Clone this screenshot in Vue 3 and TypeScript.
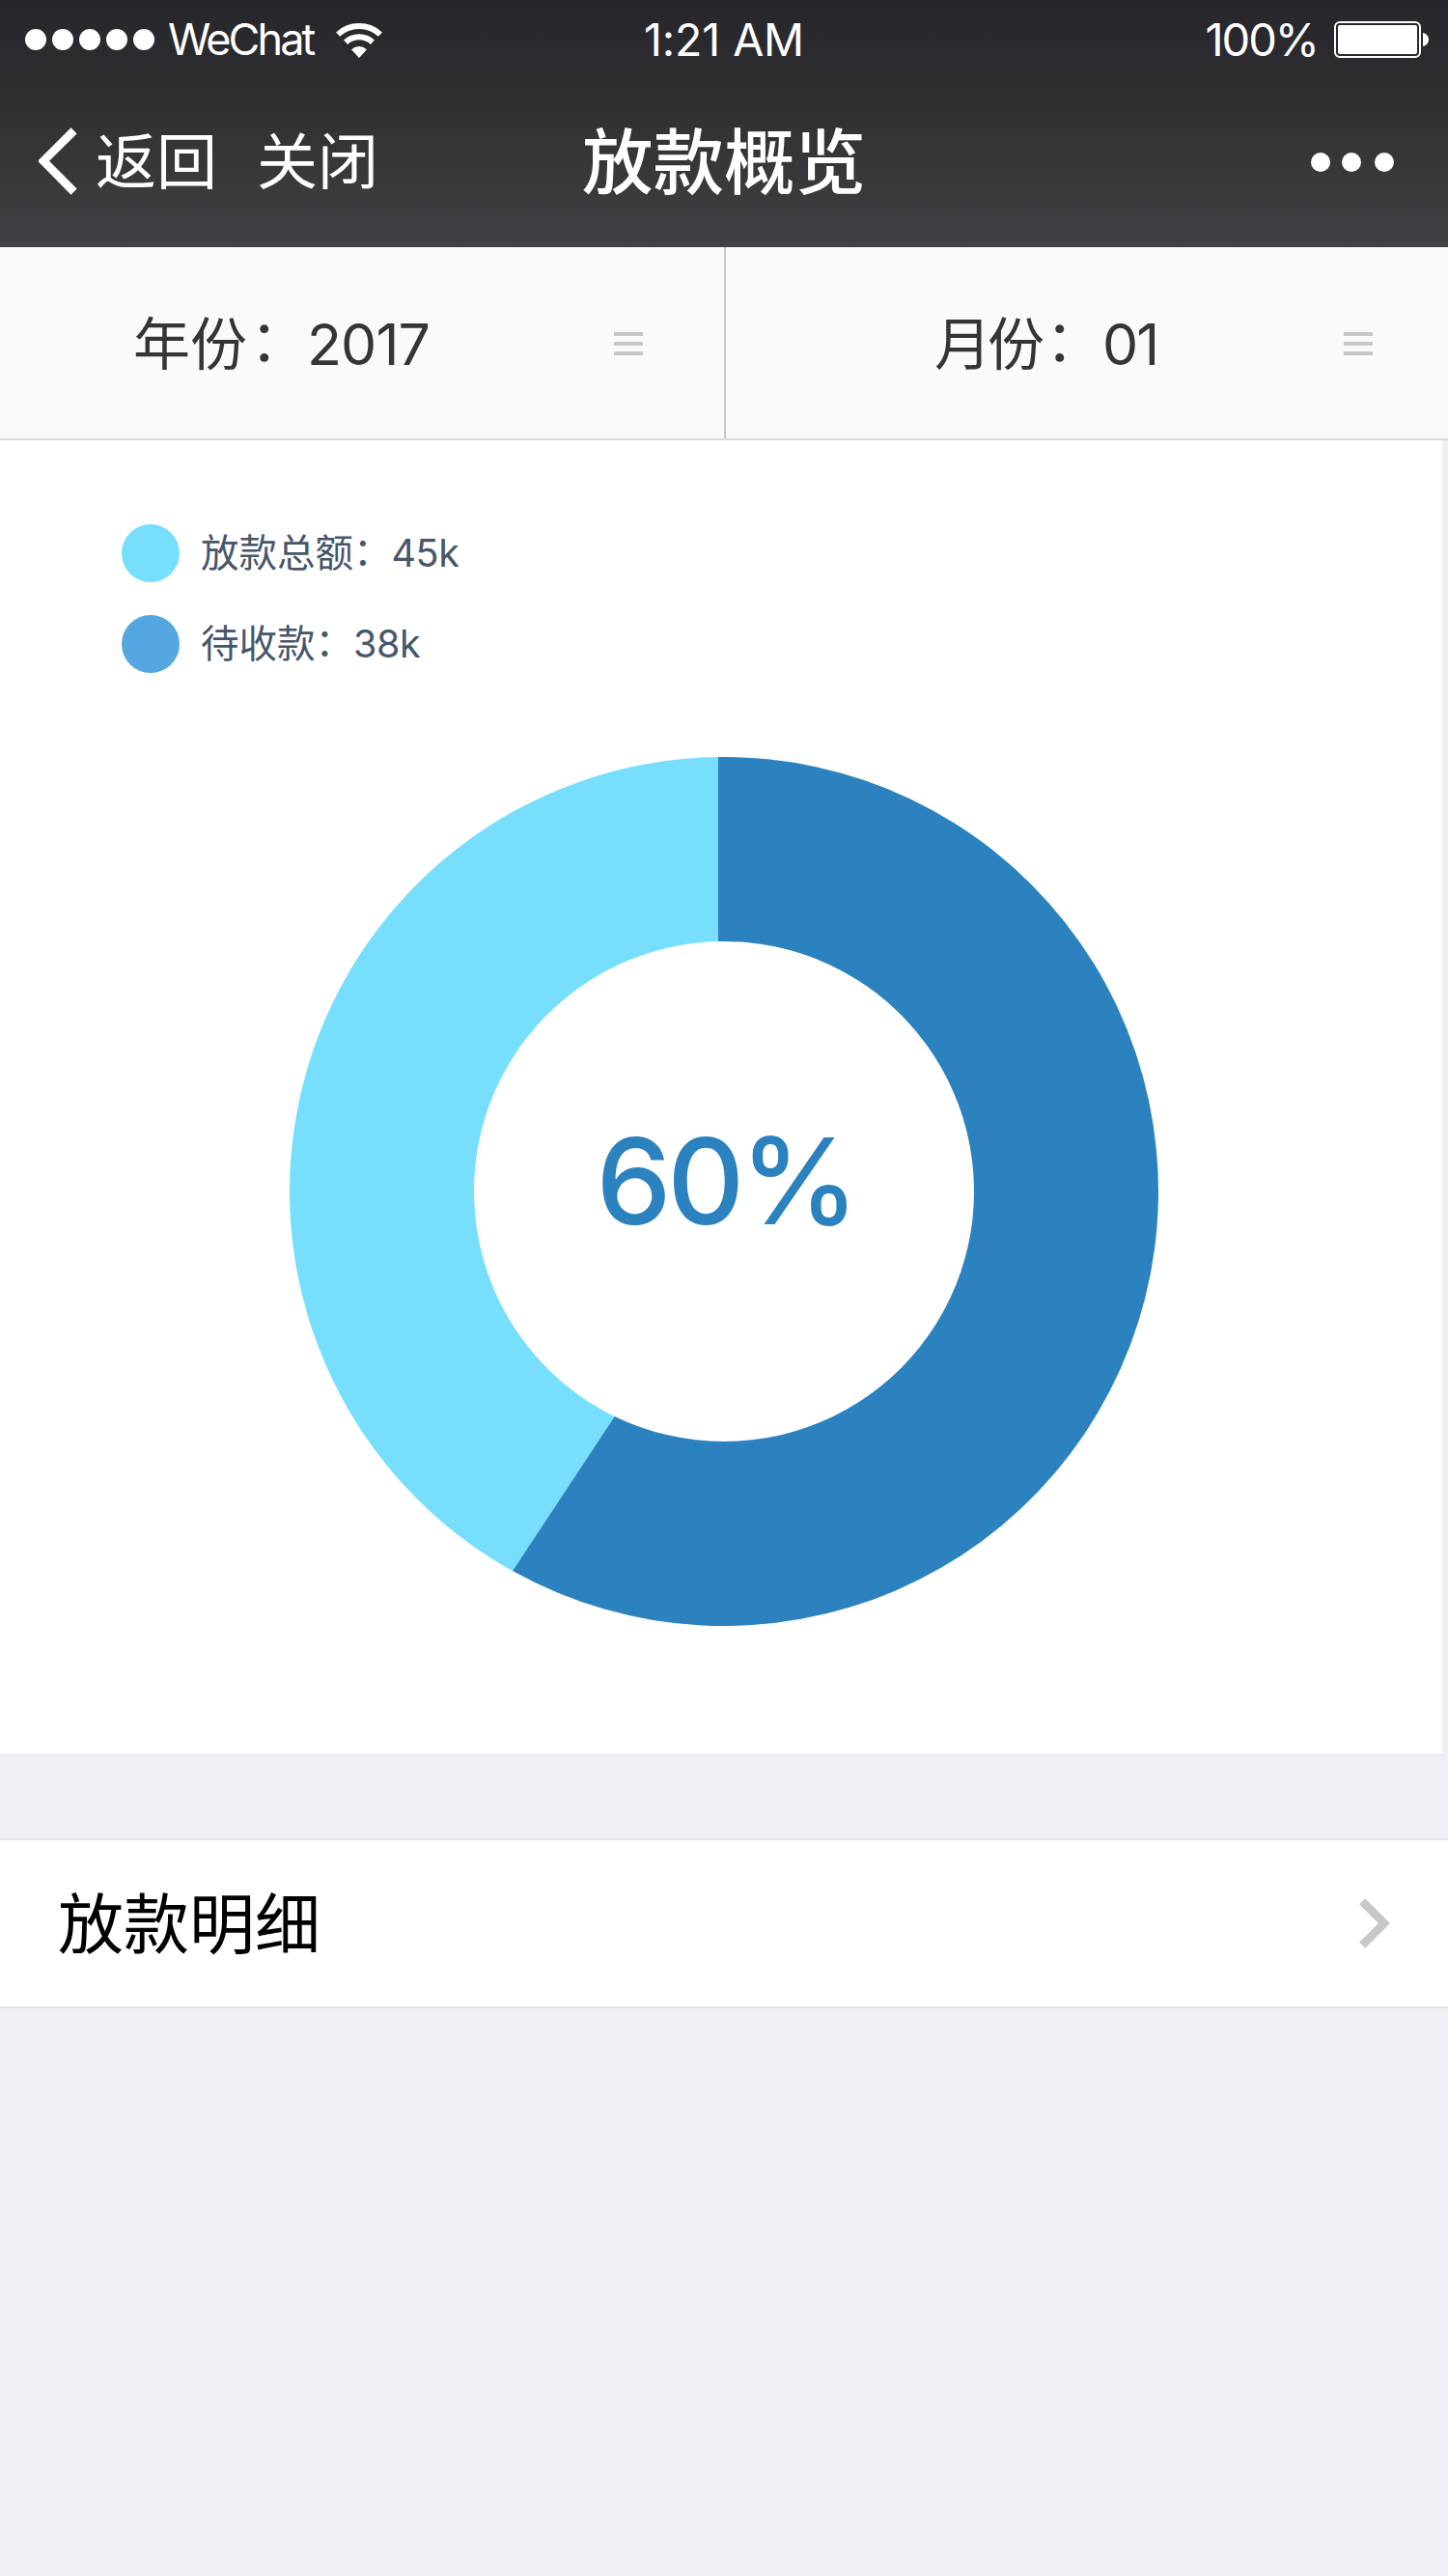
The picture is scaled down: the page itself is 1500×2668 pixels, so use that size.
<script setup lang="ts">
interface Filter { label: string; value: string; kind: string }
interface LegendItem { label: string; value: string; color: string }

const signal = [1, 2, 3, 4, 5]
const filters: Filter[] = [
  { label: '年份', value: '2017', kind: 'year' },
  { label: '月份', value: '01', kind: 'month' },
]
const legend: LegendItem[] = [
  { label: '放款总额', value: '45k', color: '#77dffd' },
  { label: '待收款', value: '38k', color: '#54a7e1' },
]
</script>

<template>
  <div class="page">
    <header class="header">
      <div class="status">
        <div class="carrier">
          <div class="signal"><i v-for="n in signal" :key="n" /></div>
          <span class="wechat">WeChat</span>
          <svg class="wifi" width="48" height="36" viewBox="0 0 48 36">
            <path d="M2.1 11.6A32.5 32.5 0 0 1 45.9 11.6" fill="none" stroke="#fff" stroke-width="6" />
            <path d="M10.1 19.7A20.5 20.5 0 0 1 37.9 19.7" fill="none" stroke="#fff" stroke-width="6" />
            <path d="M16 27.2Q24 20.8 32 27.2L24 36Z" fill="#fff" />
          </svg>
        </div>
        <span class="time">1:21 AM</span>
        <div class="power">
          <span class="percent">100%</span>
          <svg class="battery" width="98" height="38" viewBox="0 0 98 38">
            <rect x="1" y="1" width="88" height="36" rx="5" fill="none" stroke="#fff" stroke-width="2" />
            <rect x="4" y="4" width="82" height="30" rx="2" fill="#fff" />
            <path d="M92 12C100 14 100 24 92 26Z" fill="#fff" />
          </svg>
        </div>
      </div>
      <nav class="nav">
        <div class="nav-left">
          <svg width="40" height="70" viewBox="0 0 40 70">
            <path d="M36.6 3.4L5 34.8L36.6 66.6" fill="none" stroke="#fff" stroke-width="8.6" />
          </svg>
          <span class="back">返回</span>
          <span class="close">关闭</span>
        </div>
        <h1 class="title">放款概览</h1>
        <svg class="more" width="86" height="20" viewBox="0 0 86 20" fill="#fff">
          <circle cx="10" cy="10" r="10" />
          <circle cx="42" cy="10" r="10" />
          <circle cx="76" cy="10" r="10" />
        </svg>
      </nav>
    </header>

    <section class="filters">
      <div v-for="f in filters" :key="f.kind" class="filter" :class="f.kind">
        <span class="filter-text"><span class="label">{{ f.label }}</span><span class="colon">：</span><span class="num">{{ f.value }}</span></span>
        <div class="bars"><i /><i /><i /></div>
      </div>
    </section>

    <section class="card">
      <ul class="legend">
        <li v-for="item in legend" :key="item.label">
          <i class="dot" :style="{ background: item.color }" />
          <span>{{ item.label }}<span class="colon">：</span><span class="num">{{ item.value }}</span></span>
        </li>
      </ul>
      <div class="chart">
        <svg width="900" height="900" viewBox="0 0 900 900">
          <path d="M444 0.04A450 450 0 0 0 231 843.12L336.7 682.9A259 259 0 0 1 444 191.07Z" fill="#77dffd" />
          <path d="M444 0.04A450 450 0 1 1 231 843.12L336.7 682.9A259 259 0 1 0 444 191.07Z" fill="#2c82bf" />
        </svg>
        <span class="ratio">60%</span>
      </div>
    </section>

    <section class="row">
      <span class="row-text">放款明细</span>
      <svg width="32" height="52" viewBox="0 0 32 52">
        <path d="M3.2 3.2L26 26L3.2 48.8" fill="none" stroke="#c7c7cc" stroke-width="8.6" />
      </svg>
    </section>
  </div>
</template>

<style>
body {
  margin: 0;
  background: #efeff4;
}
</style>

<style scoped>
.page {
  width: 1500px;
  height: 2668px;
  overflow: hidden;
  background: #efeff5;
  font-family: Inter, "Noto Sans CJK SC", sans-serif;
}
.header {
  height: 256px;
  color: #fff;
  background: linear-gradient(#26262b, #313134 46%, #414145);
}
.status {
  height: 82px;
  display: grid;
  grid-template-columns: 500px 500px 500px;
  align-items: center;
  line-height: 82px;
  white-space: nowrap;
}
.carrier {
  display: flex;
  align-items: center;
  padding-left: 26px;
}
.signal {
  display: flex;
  gap: 6px;
}
.signal i {
  width: 22px;
  height: 22px;
  border-radius: 50%;
  background: #fff;
}
.wechat {
  width: 174px;
  margin-left: 14px;
  font-size: 45px;
  letter-spacing: -2.9px;
}
.wifi {
  margin-top: 2px;
}
.time {
  font-size: 46.5px;
  letter-spacing: -0.1px;
  text-align: center;
}
.power {
  display: flex;
  align-items: center;
  justify-content: flex-end;
  padding-right: 20px;
}
.percent {
  margin-right: 17px;
  font-size: 47px;
  letter-spacing: -2px;
}
.nav {
  height: 170px;
  display: grid;
  grid-template-columns: 500px 500px 500px;
  align-items: center;
  white-space: nowrap;
}
.nav-left {
  display: flex;
  align-items: center;
  padding-left: 40px;
  height: 170px;
  font-size: 63px;
  line-height: 70px;
}
.back {
  margin: 0 0 0 19px;
}
.close {
  margin: 0 0 0 41px;
}
.title {
  margin: -8px 0 0;
  font-size: 73.5px;
  font-weight: 500;
  text-align: center;
}
.more {
  justify-self: end;
  margin: 2px 56px 0 0;
}
.colon {
  position: relative;
  top: -0.06em;
}
.filters {
  height: 200px;
  box-sizing: border-box;
  display: flex;
  background: #fafafa;
  border-bottom: 2px solid #d9d9d9;
}
.filter {
  box-sizing: border-box;
  display: flex;
  align-items: center;
  justify-content: space-between;
  color: #353535;
  font-size: 59px;
  white-space: nowrap;
}
.filter-text {
  margin-top: -6px;
}
.filter .colon {
  margin-left: 3px;
}
.filter .num {
  letter-spacing: -0.9px;
}
.year {
  width: 752px;
  padding: 0 84px 0 138px;
  border-right: 2px solid #c8c8c8;
}
.month {
  width: 748px;
  padding: 0 78px 0 216px;
}
.month .label {
  letter-spacing: -4px;
}
.month .colon {
  margin-left: 5px;
}
.month .num {
  letter-spacing: -2px;
}
.bars {
  display: flex;
  flex-direction: column;
  gap: 6px;
  width: 30px;
  margin-top: 2px;
}
.bars i {
  height: 4px;
  background: #c7c7c7;
}
.card {
  width: 1494px;
  height: 1360px;
  box-sizing: border-box;
  padding-top: 87px;
  background: #fff;
}
.legend {
  display: flex;
  flex-direction: column;
  gap: 34px;
  margin: 0;
  padding: 0 0 0 126px;
  list-style: none;
  color: #475669;
  font-size: 39.5px;
}
.legend .num {
  letter-spacing: -0.4px;
}
.legend li {
  display: flex;
  align-items: center;
  gap: 22px;
  height: 60px;
  line-height: 56px;
}
.dot {
  width: 60px;
  height: 60px;
  border-radius: 50%;
}
.chart {
  display: grid;
  width: 900px;
  height: 900px;
  margin: 87px 0 0 300px;
}
.chart > * {
  grid-area: 1 / 1;
}
.ratio {
  place-self: center;
  color: #2c82bf;
  font-size: 124px;
  font-weight: 500;
  letter-spacing: -4.5px;
  margin: -22px 0 0 3px;
}
.row {
  height: 176px;
  box-sizing: border-box;
  margin-top: 88px;
  padding: 0 60px;
  display: flex;
  align-items: center;
  justify-content: space-between;
  border-top: 2px solid #e5e5e5;
  border-bottom: 2px solid #e5e5e5;
  background: #fff;
  color: #000;
  font-size: 68px;
}
.row-text {
  margin-top: -8px;
}
</style>
